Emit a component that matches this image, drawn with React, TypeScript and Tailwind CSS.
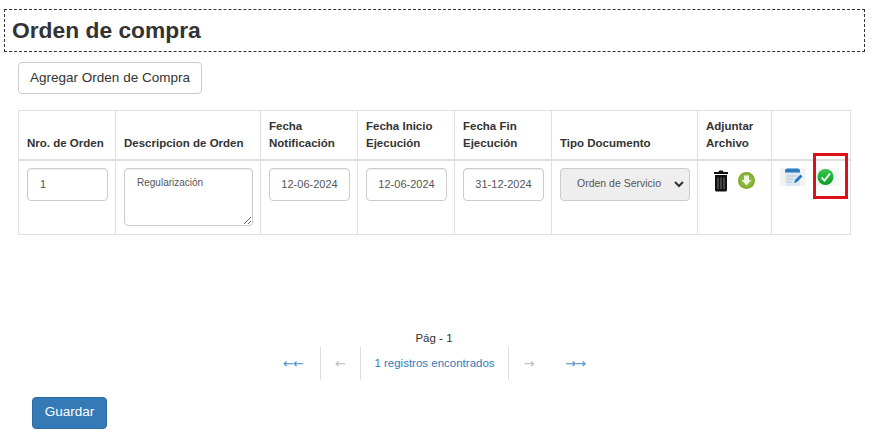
import React from 'react';

const inputClass =
  'block h-[33px] border border-[#ccc] rounded bg-white text-[#555] shadow-[inset_0_1px_1px_rgba(0,0,0,0.075)] outline-none';

function TrashIcon() {
  return (
    <svg width="16" height="22" viewBox="0 0 16 22">
      <path d="M5.5 2 L6.3 .5 H9.7 L10.5 2 H15 V4 H1 V2 Z" fill="#111" />
      <path d="M2 5 H14 V20 Q14 21.5 12.5 21.5 H3.5 Q2 21.5 2 20 Z" fill="#111" />
      <path d="M5 7.5 V19 M8 7.5 V19 M11 7.5 V19" stroke="#777" strokeWidth="1" />
    </svg>
  );
}

function DownloadIcon() {
  return (
    <svg width="17" height="17" viewBox="0 0 17 17">
      <circle cx="8.5" cy="8.5" r="8.5" fill="#7fa92e" />
      <circle cx="8.5" cy="8.5" r="6.8" fill="#8cb83a" />
      <path d="M6 3.5 H11 V8 H13.5 L8.5 13.5 L3.5 8 H6 Z" fill="#f1f5e4" />
    </svg>
  );
}

function EditIcon() {
  return (
    <svg width="26" height="18" viewBox="0 0 26 18">
      <rect width="26" height="18" fill="#f1f3f4" />
      <rect x="5" y="1" width="15" height="17" rx="2" fill="#dfe8f1" />
      <path d="M5 3 Q5 .5 7.5 .5 H17.5 Q20 .5 20 3 V4.5 H5 Z" fill="#2b7cc4" />
      <path d="M7 8 H17 M7 11 H13 M7 14 H12" stroke="#b3c3d2" strokeWidth="1" />
      <path d="M14 15 L15 12 L20.5 6.5 L22.5 8.5 L17 14 Z" fill="#1f78c8" />
    </svg>
  );
}

function CheckIcon() {
  return (
    <svg width="22" height="18" viewBox="0 0 22 18">
      <rect width="22" height="18" fill="#f5f6f5" />
      <defs>
        <linearGradient id="okGreen" x1="0" y1="0" x2="0" y2="1">
          <stop offset="0" stopColor="#35c94a" />
          <stop offset="1" stopColor="#0c9c2a" />
        </linearGradient>
      </defs>
      <circle cx="8.5" cy="9" r="8" fill="url(#okGreen)" />
      <path d="M4.5 9.5 L7.5 12.5 L13 5.5" fill="none" stroke="#f2fff2" strokeWidth="2" />
    </svg>
  );
}

function HeaderCell({ children, width }: { children: React.ReactNode; width: string }) {
  return (
    <th className={`${width} border border-[#e0e0e0] border-b-2 px-2 pb-[7px] pt-[5px] text-left align-bottom text-[11.5px] font-bold leading-[17px] text-[#333]`}>
      {children}
    </th>
  );
}

function BodyCell({ children, width }: { children: React.ReactNode; width: string }) {
  return <td className={`${width} border border-[#e0e0e0] px-2 pb-2 pt-[7px] align-top`}>{children}</td>;
}

function DateInput({ value }: { value: string }) {
  return <input readOnly value={value} className={`${inputClass} w-[81px] text-center text-[11px]`} />;
}

export default function App() {
  return (
    <div className="relative h-[442px] w-[886px] overflow-hidden bg-white font-['Liberation_Sans',Arial,sans-serif] text-[#333]">
      <div className="ml-1 mt-[9px] flex h-[43px] w-[861px] items-center border border-dashed border-[#333] px-[7px]">
        <h1 className="text-[22.8px] font-bold text-[#333]">Orden de compra</h1>
      </div>

      <button className="ml-[18px] mt-[10px] block h-[32px] w-[184px] rounded border border-[#ccc] bg-white text-[13.5px] text-[#333]">
        Agregar Orden de Compra
      </button>

      <table className="ml-[18px] mt-4 w-[832px] table-fixed border-collapse">
        <thead>
          <tr className="h-[49px]">
            <HeaderCell width="w-[97px]">Nro. de Orden</HeaderCell>
            <HeaderCell width="w-[145px]">Descripcion de Orden</HeaderCell>
            <HeaderCell width="w-[97px]">Fecha Notificación</HeaderCell>
            <HeaderCell width="w-[97px]">Fecha Inicio Ejecución</HeaderCell>
            <HeaderCell width="w-[97px]">Fecha Fin Ejecución</HeaderCell>
            <HeaderCell width="w-[146px]">Tipo Documento</HeaderCell>
            <HeaderCell width="w-[74px]">Adjuntar Archivo</HeaderCell>
            <HeaderCell width="w-[79px]">{''}</HeaderCell>
          </tr>
        </thead>
        <tbody>
          <tr className="h-[73px]">
            <BodyCell width="w-[97px]">
              <input readOnly value="1" className={`${inputClass} w-[81px] px-3 text-[11px]`} />
            </BodyCell>
            <BodyCell width="w-[145px]">
              <textarea
                readOnly
                value="Regularización"
                className={`${inputClass} h-[58px] w-[129px] px-3 py-[5px] text-[10px] leading-[17px]`}
              />
            </BodyCell>
            <BodyCell width="w-[97px]">
              <DateInput value="12-06-2024" />
            </BodyCell>
            <BodyCell width="w-[97px]">
              <DateInput value="12-06-2024" />
            </BodyCell>
            <BodyCell width="w-[97px]">
              <DateInput value="31-12-2024" />
            </BodyCell>
            <BodyCell width="w-[146px]">
              <div className="flex h-[33px] w-[130px] items-center justify-between rounded border border-[#ccc] bg-[#eee] pl-4 pr-[5px] text-[10.5px] text-[#555]">
                <span>Orden de Servicio</span>
                <svg width="10" height="7" viewBox="0 0 10 7">
                  <path d="M1 1 L5 5 L9 1" fill="none" stroke="#333" strokeWidth="2" />
                </svg>
              </div>
            </BodyCell>
            <BodyCell width="w-[74px]">
              <div className="flex items-center gap-[9px] pl-[7px] pt-[2px]">
                <TrashIcon />
                <DownloadIcon />
              </div>
            </BodyCell>
            <BodyCell width="w-[79px]">
              <div className="relative flex items-start gap-[11px]">
                <EditIcon />
                <CheckIcon />
                <div className="absolute left-[33px] top-[-15px] h-[46px] w-[35px] border-[3px] border-[#e01018]" />
              </div>
            </BodyCell>
          </tr>
        </tbody>
      </table>

      <p className="mt-[95px] w-[868px] text-center text-[11.5px] leading-[17px] text-[#333]">Pág - 1</p>

      <nav className="ml-[266px] flex h-[33px] w-[336px] items-center text-[11.5px] text-[#337ab7]">
        <span className="flex w-[55px] justify-center border-r border-[#ddd] font-['DejaVu_Sans',sans-serif] text-[13px] leading-[33px] tracking-[-1px] text-[#4a90d0]">←←</span>
        <span className="flex w-[40px] justify-center border-r border-[#ddd] font-['DejaVu_Sans',sans-serif] text-[13px] leading-[33px] text-[#bbb]">←</span>
        <span className="flex w-[148px] justify-center border-r border-[#ddd] leading-[33px]">1 registros encontrados</span>
        <span className="flex w-[40px] justify-center font-['DejaVu_Sans',sans-serif] text-[13px] leading-[33px] text-[#bbb]">→</span>
        <span className="flex w-[52px] justify-center font-['DejaVu_Sans',sans-serif] text-[13px] leading-[33px] tracking-[-1px] text-[#4a90d0]">→→</span>
      </nav>

      <button className="ml-[32px] mt-[17px] block h-[32px] w-[75px] rounded border border-[#2e6da4] bg-[#337ab7] text-[13.5px] text-white">
        Guardar
      </button>
    </div>
  );
}
